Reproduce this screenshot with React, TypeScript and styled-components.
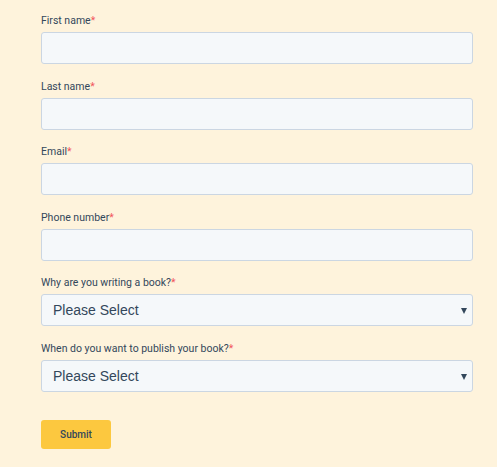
import React from 'react';
import styled, { createGlobalStyle } from 'styled-components';

const GlobalStyle = createGlobalStyle`
  html, body {
    margin: 0;
    padding: 0;
    background: #fef3dc;
  }
  body {
    font-family: Roboto, "Liberation Sans", Arial, sans-serif;
  }
`;

const Page = styled.div`
  width: 497px;
  min-height: 467px;
  background: #fef3dc;
  box-sizing: border-box;
  padding: 12px 24px 0 41px;
`;

const Form = styled.form`
  display: flex;
  flex-direction: column;
  width: 432px;
`;

const Field = styled.div`
  display: flex;
  flex-direction: column;
  margin-bottom: 13.6px;
`;

const Label = styled.label`
  font-size: 10.5px;
  line-height: 18px;
  color: #33475b;
  margin-bottom: 2px;
`;

const Req = styled.span`
  color: #f2545b;
`;

const Input = styled.input`
  box-sizing: border-box;
  width: 100%;
  height: 32px;
  border: 1px solid #cbd6e2;
  border-radius: 3px;
  background: #f5f8fa;
  padding: 0 12px;
  font-family: inherit;
  font-size: 14px;
  outline: none;
`;

const SelectWrap = styled.div`
  position: relative;
  &::after {
    content: '';
    position: absolute;
    right: 6px;
    top: 14px;
    border-left: 3.5px solid transparent;
    border-right: 3.5px solid transparent;
    border-top: 6px solid #33475b;
    pointer-events: none;
  }
`;

const Select = styled.select`
  box-sizing: border-box;
  width: 100%;
  height: 32px;
  border: 1px solid #cbd6e2;
  border-radius: 3px;
  background: #f5f8fa;
  padding: 0 11px;
  font-family: "Liberation Sans", Arial, sans-serif;
  font-size: 14px;
  color: #33475b;
  appearance: none;
  -webkit-appearance: none;
  outline: none;
`;

const Actions = styled.div`
  padding-top: 14px;
`;

const SubmitButton = styled.button`
  width: 70px;
  height: 29px;
  border: none;
  border-radius: 3px;
  background: #fcc83f;
  color: #33475b;
  font-family: Roboto, "Liberation Sans", Arial, sans-serif;
  font-size: 10px;
  font-weight: 500;
  cursor: pointer;
`;

const textFields = ['First name', 'Last name', 'Email', 'Phone number'];
const selectFields = ['Why are you writing a book?', 'When do you want to publish your book?'];

const App = (): JSX.Element => {
  return (
    <>
      <GlobalStyle />
      <Page>
        <Form onSubmit={(e) => e.preventDefault()}>
          {textFields.map((name) => (
            <Field key={name}>
              <Label>
                {name}
                <Req>*</Req>
              </Label>
              <Input type="text" />
            </Field>
          ))}
          {selectFields.map((name) => (
            <Field key={name}>
              <Label>
                {name}
                <Req>*</Req>
              </Label>
              <SelectWrap>
                <Select defaultValue="">
                  <option value="" disabled>
                    Please Select
                  </option>
                </Select>
              </SelectWrap>
            </Field>
          ))}
          <Actions>
            <SubmitButton type="submit">Submit</SubmitButton>
          </Actions>
        </Form>
      </Page>
    </>
  );
};

export default App;
